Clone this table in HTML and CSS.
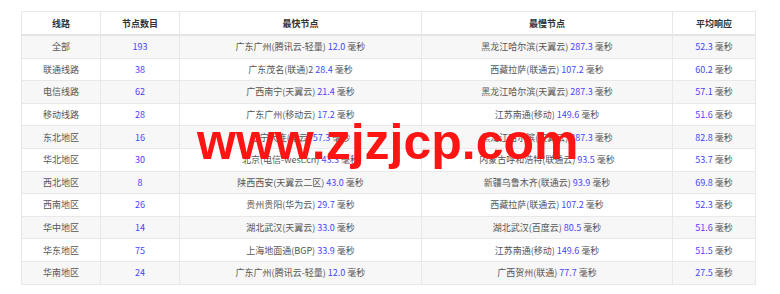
FILE: index.html
```html
<!DOCTYPE html>
<html lang="zh-CN">
<head>
<meta charset="utf-8">
<title>节点统计</title>
<link rel="stylesheet" href="styles.css">
</head>
<body>
<div class="wrap">
  <table class="stats">
    <colgroup>
      <col class="c1"><col class="c2"><col class="c3"><col class="c4"><col class="c5">
    </colgroup>
    <thead>
      <tr><th>线路</th><th>节点数目</th><th>最快节点</th><th>最慢节点</th><th>平均响应</th></tr>
    </thead>
    <tbody>
      <tr><td>全部</td><td class="v">193</td><td>广东广州(腾讯云-轻量) <span class="v">12.0</span> 毫秒</td><td>黑龙江哈尔滨(天翼云) <span class="v">287.3</span> 毫秒</td><td><span class="v">52.3</span> 毫秒</td></tr>
      <tr><td>联通线路</td><td class="v">38</td><td>广东茂名(联通)2 <span class="v">28.4</span> 毫秒</td><td>西藏拉萨(联通云) <span class="v">107.2</span> 毫秒</td><td><span class="v">60.2</span> 毫秒</td></tr>
      <tr><td>电信线路</td><td class="v">62</td><td>广西南宁(天翼云) <span class="v">21.4</span> 毫秒</td><td>黑龙江哈尔滨(天翼云) <span class="v">287.3</span> 毫秒</td><td><span class="v">57.1</span> 毫秒</td></tr>
      <tr><td>移动线路</td><td class="v">28</td><td>广东广州(移动云) <span class="v">17.2</span> 毫秒</td><td>江苏南通(移动) <span class="v">149.6</span> 毫秒</td><td><span class="v">51.6</span> 毫秒</td></tr>
      <tr><td>东北地区</td><td class="v">16</td><td>辽宁大连(电云) <span class="v">57.3</span> 毫秒</td><td>黑龙江哈尔滨(天翼云) <span class="v">287.3</span> 毫秒</td><td><span class="v">82.8</span> 毫秒</td></tr>
      <tr><td>华北地区</td><td class="v">30</td><td>北京(电信-west.cn) <span class="v">43.3</span> 毫秒</td><td>内蒙古呼和浩特(联通云) <span class="v">93.5</span> 毫秒</td><td><span class="v">53.7</span> 毫秒</td></tr>
      <tr><td>西北地区</td><td class="v">8</td><td>陕西西安(天翼云二区) <span class="v">43.0</span> 毫秒</td><td>新疆乌鲁木齐(联通云) <span class="v">93.9</span> 毫秒</td><td><span class="v">69.8</span> 毫秒</td></tr>
      <tr><td>西南地区</td><td class="v">26</td><td>贵州贵阳(华为云) <span class="v">29.7</span> 毫秒</td><td>西藏拉萨(联通云) <span class="v">107.2</span> 毫秒</td><td><span class="v">52.3</span> 毫秒</td></tr>
      <tr><td>华中地区</td><td class="v">14</td><td>湖北武汉(天翼云) <span class="v">33.0</span> 毫秒</td><td>湖北武汉(百度云) <span class="v">80.5</span> 毫秒</td><td><span class="v">51.6</span> 毫秒</td></tr>
      <tr><td>华东地区</td><td class="v">75</td><td>上海地面通(BGP) <span class="v">33.9</span> 毫秒</td><td>江苏南通(移动) <span class="v">149.6</span> 毫秒</td><td><span class="v">51.5</span> 毫秒</td></tr>
      <tr><td>华南地区</td><td class="v">24</td><td>广东广州(腾讯云-轻量) <span class="v">12.0</span> 毫秒</td><td>广西贺州(联通) <span class="v">77.7</span> 毫秒</td><td><span class="v">27.5</span> 毫秒</td></tr>
    </tbody>
  </table>
  <div class="watermark">www.zjzjcp.com</div>
</div>
</body>
</html>
```

FILE: styles.css
```css
html, body {
  margin: 0;
  padding: 0;
  background: #ffffff;
}

.wrap {
  position: relative;
  padding: 11px 0 0 21px;
}

.stats {
  width: 734px;
  border-collapse: collapse;
  table-layout: fixed;
  font-family: "Noto Sans CJK SC", "Noto Sans", sans-serif;
  font-size: 9px;
  color: #555555;
}

.c1 { width: 79px; }
.c2 { width: 79px; }
.c3 { width: 242px; }
.c4 { width: 251px; }
.c5 { width: 83px; }

.stats th,
.stats td {
  border: 1px solid #e8e8e8;
  text-align: center;
  padding: 0;
  white-space: nowrap;
}

.stats th {
  height: 22px;
  font-weight: bold;
  color: #333333;
  background: #ffffff;
  border-bottom: 2px solid #e4e4e4;
}

.stats td {
  height: 21.6px;
}

.stats tbody tr:nth-child(odd) td {
  background: #f7f7f7;
}

.stats .v {
  color: #4646ff;
}

.watermark {
  position: absolute;
  left: 197px;
  top: 117px;
  font-family: "Liberation Sans", Arial, sans-serif;
  font-weight: bold;
  font-size: 50px;
  line-height: 50px;
  color: #ff1414;
  white-space: nowrap;
}
```
